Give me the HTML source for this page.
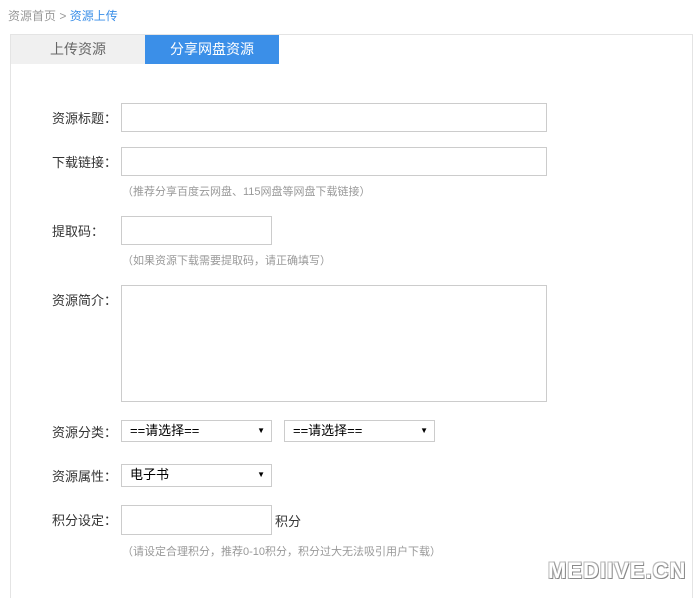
<!DOCTYPE html><html><head><meta charset="utf-8"><style>
html,body{margin:0;width:700px;height:598px;overflow:hidden}
body{background:#fff;font-family:"Liberation Sans","Noto Sans CJK SC",sans-serif;position:relative}
.a{position:absolute}
.bc{left:8px;top:7px;font-size:12px;color:#999}
.bc span{color:#3b8fe8}
.box{left:10px;top:34px;width:681px;height:580px;border:1px solid #e4e4e4}
.t1{left:11px;top:35px;width:134px;height:29px;background:#f0f0f0;color:#666;font-size:14px;text-align:center;line-height:29px}
.t2{left:145px;top:35px;width:134px;height:29px;background:#3b8fe8;color:#fff;font-size:14px;text-align:center;line-height:29px}
.l{font-size:13px;color:#333;left:52px}
.i{border:1px solid #ccc;background:#fff;box-sizing:border-box}
.h{font-size:11px;color:#999;left:122px}
.s{border:1px solid #ccc;box-sizing:border-box;font-size:13px;color:#000;padding-left:8px;line-height:20px}
.s b{position:absolute;right:6px;font-size:8px;font-weight:normal}
.wm{left:548px;top:558px;font-size:22px;color:#fff;font-weight:bold;letter-spacing:1px;text-shadow:1px 1px 0 #888,-1px -1px 0 #bbb,1px -1px 0 #aaa,-1px 1px 0 #aaa}
</style></head><body>
<div class="a bc">资源首页 &gt; <span>资源上传</span></div>
<div class="a box"></div>
<div class="a t1">上传资源</div><div class="a t2">分享网盘资源</div>
<div class="a l" style="top:108px">资源标题：</div><div class="a i" style="left:121px;top:103px;width:426px;height:29px"></div>
<div class="a l" style="top:152px">下载链接：</div><div class="a i" style="left:121px;top:147px;width:426px;height:29px"></div>
<div class="a h" style="top:183px">（推荐分享百度云网盘、115网盘等网盘下载链接）</div>
<div class="a l" style="top:221px">提取码：</div><div class="a i" style="left:121px;top:216px;width:151px;height:29px"></div>
<div class="a h" style="top:252px">（如果资源下载需要提取码，请正确填写）</div>
<div class="a l" style="top:290px">资源简介：</div><div class="a i" style="left:121px;top:285px;width:426px;height:117px"></div>
<div class="a l" style="top:422px">资源分类：</div>
<div class="a s" style="left:121px;top:420px;width:151px;height:22px">==请选择==<b>▼</b></div>
<div class="a s" style="left:284px;top:420px;width:151px;height:22px">==请选择==<b>▼</b></div>
<div class="a l" style="top:466px">资源属性：</div>
<div class="a s" style="left:121px;top:464px;width:151px;height:23px">电子书<b>▼</b></div>
<div class="a l" style="top:510px">积分设定：</div><div class="a i" style="left:121px;top:505px;width:151px;height:30px"></div>
<div class="a" style="left:275px;top:511px;font-size:13px;color:#333">积分</div>
<div class="a h" style="top:543px">（请设定合理积分，推荐0-10积分，积分过大无法吸引用户下载）</div>
<div class="a wm">MEDIIVE.CN</div>
</body></html>
